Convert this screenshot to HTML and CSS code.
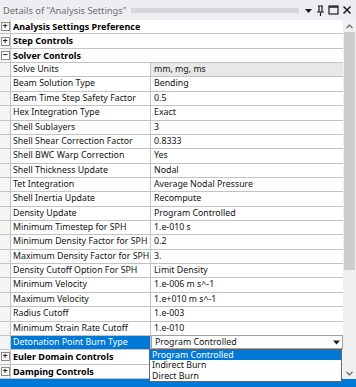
FILE: index.html
```html
<!DOCTYPE html>
<html lang="en">
<head>
  <meta charset="UTF-8">
  <title>Details of "Analysis Settings"</title>
  <link rel="stylesheet" href="styles.css">
</head>
<body>
  <div class="panel">
    <div class="titlebar">
      <span class="title">Details of "Analysis Settings"</span>
      <span class="grip"></span>
      <span class="tools">
        <svg width="9" height="9" viewBox="0 0 9 9"><path d="M1 3h7L4.5 7z" fill="#1e1e1e"/></svg>
        <svg width="9" height="11" viewBox="0 0 9 11"><path d="M2 1h5M3 1v6M6 1v6M1 7h7M4.5 7v4" stroke="#1e1e1e" stroke-width="1.2" fill="none"/></svg>
        <svg width="11" height="10" viewBox="0 0 11 10"><rect x="1" y="1" width="9" height="8" stroke="#1e1e1e" stroke-width="1.2" fill="none"/><path d="M1 2h9" stroke="#1e1e1e" stroke-width="1.5"/></svg>
        <svg width="10" height="10" viewBox="0 0 10 10"><path d="M1.5 1.5l7 7M8.5 1.5l-7 7" stroke="#1e1e1e" stroke-width="1.6"/></svg>
      </span>
    </div>

    <div class="body">
      <div class="grid">
        <div class="group"><span class="gutter"><span class="toggle">+</span></span><span class="gname">Analysis Settings Preference</span></div>
        <div class="group"><span class="gutter"><span class="toggle">+</span></span><span class="gname">Step Controls</span></div>
        <div class="group"><span class="gutter"><span class="toggle">−</span></span><span class="gname">Solver Controls</span></div>

        <div class="prop"><span class="gutter"></span><span class="name">Solve Units</span><span class="value ro">mm, mg, ms</span></div>
        <div class="prop"><span class="gutter"></span><span class="name">Beam Solution Type</span><span class="value">Bending</span></div>
        <div class="prop"><span class="gutter"></span><span class="name">Beam Time Step Safety Factor</span><span class="value">0.5</span></div>
        <div class="prop"><span class="gutter"></span><span class="name">Hex Integration Type</span><span class="value">Exact</span></div>
        <div class="prop"><span class="gutter"></span><span class="name">Shell Sublayers</span><span class="value">3</span></div>
        <div class="prop"><span class="gutter"></span><span class="name">Shell Shear Correction Factor</span><span class="value">0.8333</span></div>
        <div class="prop"><span class="gutter"></span><span class="name">Shell BWC Warp Correction</span><span class="value">Yes</span></div>
        <div class="prop"><span class="gutter"></span><span class="name">Shell Thickness Update</span><span class="value">Nodal</span></div>
        <div class="prop"><span class="gutter"></span><span class="name">Tet Integration</span><span class="value">Average Nodal Pressure</span></div>
        <div class="prop"><span class="gutter"></span><span class="name">Shell Inertia Update</span><span class="value">Recompute</span></div>
        <div class="prop"><span class="gutter"></span><span class="name">Density Update</span><span class="value">Program Controlled</span></div>
        <div class="prop"><span class="gutter"></span><span class="name">Minimum Timestep for SPH</span><span class="value">1.e-010 s</span></div>
        <div class="prop"><span class="gutter"></span><span class="name">Minimum Density Factor for SPH</span><span class="value">0.2</span></div>
        <div class="prop"><span class="gutter"></span><span class="name">Maximum Density Factor for SPH</span><span class="value">3.</span></div>
        <div class="prop"><span class="gutter"></span><span class="name">Density Cutoff Option For SPH</span><span class="value">Limit Density</span></div>
        <div class="prop"><span class="gutter"></span><span class="name">Minimum Velocity</span><span class="value">1.e-006 m s^-1</span></div>
        <div class="prop"><span class="gutter"></span><span class="name">Maximum Velocity</span><span class="value">1.e+010 m s^-1</span></div>
        <div class="prop"><span class="gutter"></span><span class="name">Radius Cutoff</span><span class="value">1.e-003</span></div>
        <div class="prop"><span class="gutter"></span><span class="name">Minimum Strain Rate Cutoff</span><span class="value">1.e-010</span></div>
        <div class="prop selected">
          <span class="gutter"></span><span class="name">Detonation Point Burn Type</span>
          <span class="value combo">Program Controlled<span class="drop"><svg width="7" height="5" viewBox="0 0 7 5"><path d="M0 0.5h7L3.5 4.5z" fill="#1e1e1e"/></svg></span></span>
          <ul class="options">
            <li class="active">Program Controlled</li>
            <li>Indirect Burn</li>
            <li>Direct Burn</li>
          </ul>
        </div>

        <div class="group"><span class="gutter"><span class="toggle">+</span></span><span class="gname">Euler Domain Controls</span></div>
        <div class="group"><span class="gutter"><span class="toggle">+</span></span><span class="gname">Damping Controls</span></div>
      </div>

      <div class="scrollbar">
        <span class="arrow">
          <svg width="7" height="5" viewBox="0 0 7 5"><path d="M0.5 4.2L3.5 1.2L6.5 4.2" stroke="#5a5a5a" stroke-width="1.2" fill="none"/></svg>
        </span>
        <span class="thumb"></span>
        <span class="track"></span>
        <span class="arrow">
          <svg width="7" height="5" viewBox="0 0 7 5"><path d="M0.5 0.8L3.5 3.8L6.5 0.8" stroke="#5a5a5a" stroke-width="1.2" fill="none"/></svg>
        </span>
      </div>
    </div>

    <div class="status"></div>
  </div>
</body>
</html>
```

FILE: styles.css
```css
/* Page */
body {
margin: 0;
background: #f0f0f0;
font-family: "Noto Sans", "Open Sans", sans-serif;
font-size: 8.8px;
color: #111;
}

.panel {
width: 356px;
height: 387px;
display: flex;
flex-direction: column;
overflow: hidden;
}

/* Title bar */
.titlebar {
height: 20px;
display: flex;
align-items: center;
padding: 0 4px 0 3px;
background: #eeeef2;
box-sizing: border-box;
}

.title {
color: #6d6d6d;
font-size: 9.3px;
white-space: nowrap;
}

.grip {
flex: 1;
height: 5px;
margin: 1px 5px 0 4px;
background-image: radial-gradient(circle, #b9b9c0 0.6px, transparent 0.8px);
background-size: 2px 2px;
}

.tools {
display: flex;
align-items: center;
gap: 3px;
}

/* Property grid */
.body {
display: flex;
height: 359px;
position: relative;
}

.grid {
width: 343px;
background: #fff;
}

.group, .prop {
height: 14.36px;
display: flex;
box-sizing: border-box;
border-bottom: 1px solid #c3c3c3;
position: relative;
}

.gutter {
width: 10px;
flex: none;
background: #f5f5f5;
border-right: 1px solid #c3c3c3;
display: flex;
align-items: center;
justify-content: center;
}

.toggle {
width: 7px;
height: 7px;
border: 1px solid #8a8a8a;
background: #fff;
font-size: 9px;
line-height: 6px;
text-align: center;
font-weight: bold;
color: #222;
}

.gname {
padding-left: 2px;
font-size: 9px;
font-weight: bold;
line-height: 13px;
color: #000;
}

.name {
width: 137px;
flex: none;
padding-left: 2px;
line-height: 13px;
border-right: 1px solid #c3c3c3;
white-space: nowrap;
}

.value {
flex: 1;
padding-left: 3px;
line-height: 13px;
white-space: nowrap;
}

.ro {
background: #e8e8e8;
}

/* Selected row with open combo */
.selected .name {
background: #0078d7;
color: #fff;
}

.combo {
display: flex;
justify-content: space-between;
border: 1px solid #a0a0a0;
margin: -1px 0 0 0;
line-height: 12px;
}

.drop {
width: 11px;
display: flex;
align-items: center;
justify-content: center;
}

.options {
position: absolute;
top: 13px;
left: 149px;
width: 193px;
margin: 0;
padding: 0;
list-style: none;
background: #fff;
border: 1px solid #646464;
box-sizing: border-box;
z-index: 2;
}

.options li {
height: 10.3px;
line-height: 10.3px;
padding-left: 2px;
overflow: hidden;
}

.options .active {
background: #0078d7;
color: #fff;
}

/* Scrollbar */
.scrollbar {
width: 13px;
display: flex;
flex-direction: column;
background: #f0f0f0;
}

.arrow {
height: 12px;
display: flex;
align-items: center;
justify-content: center;
}

.thumb {
height: 238px;
margin: 0 1px;
background: #cdcdcd;
}

.track {
flex: 1;
}

/* Bottom bar */
.status {
flex: 1;
background: #0078d7;
}
```
